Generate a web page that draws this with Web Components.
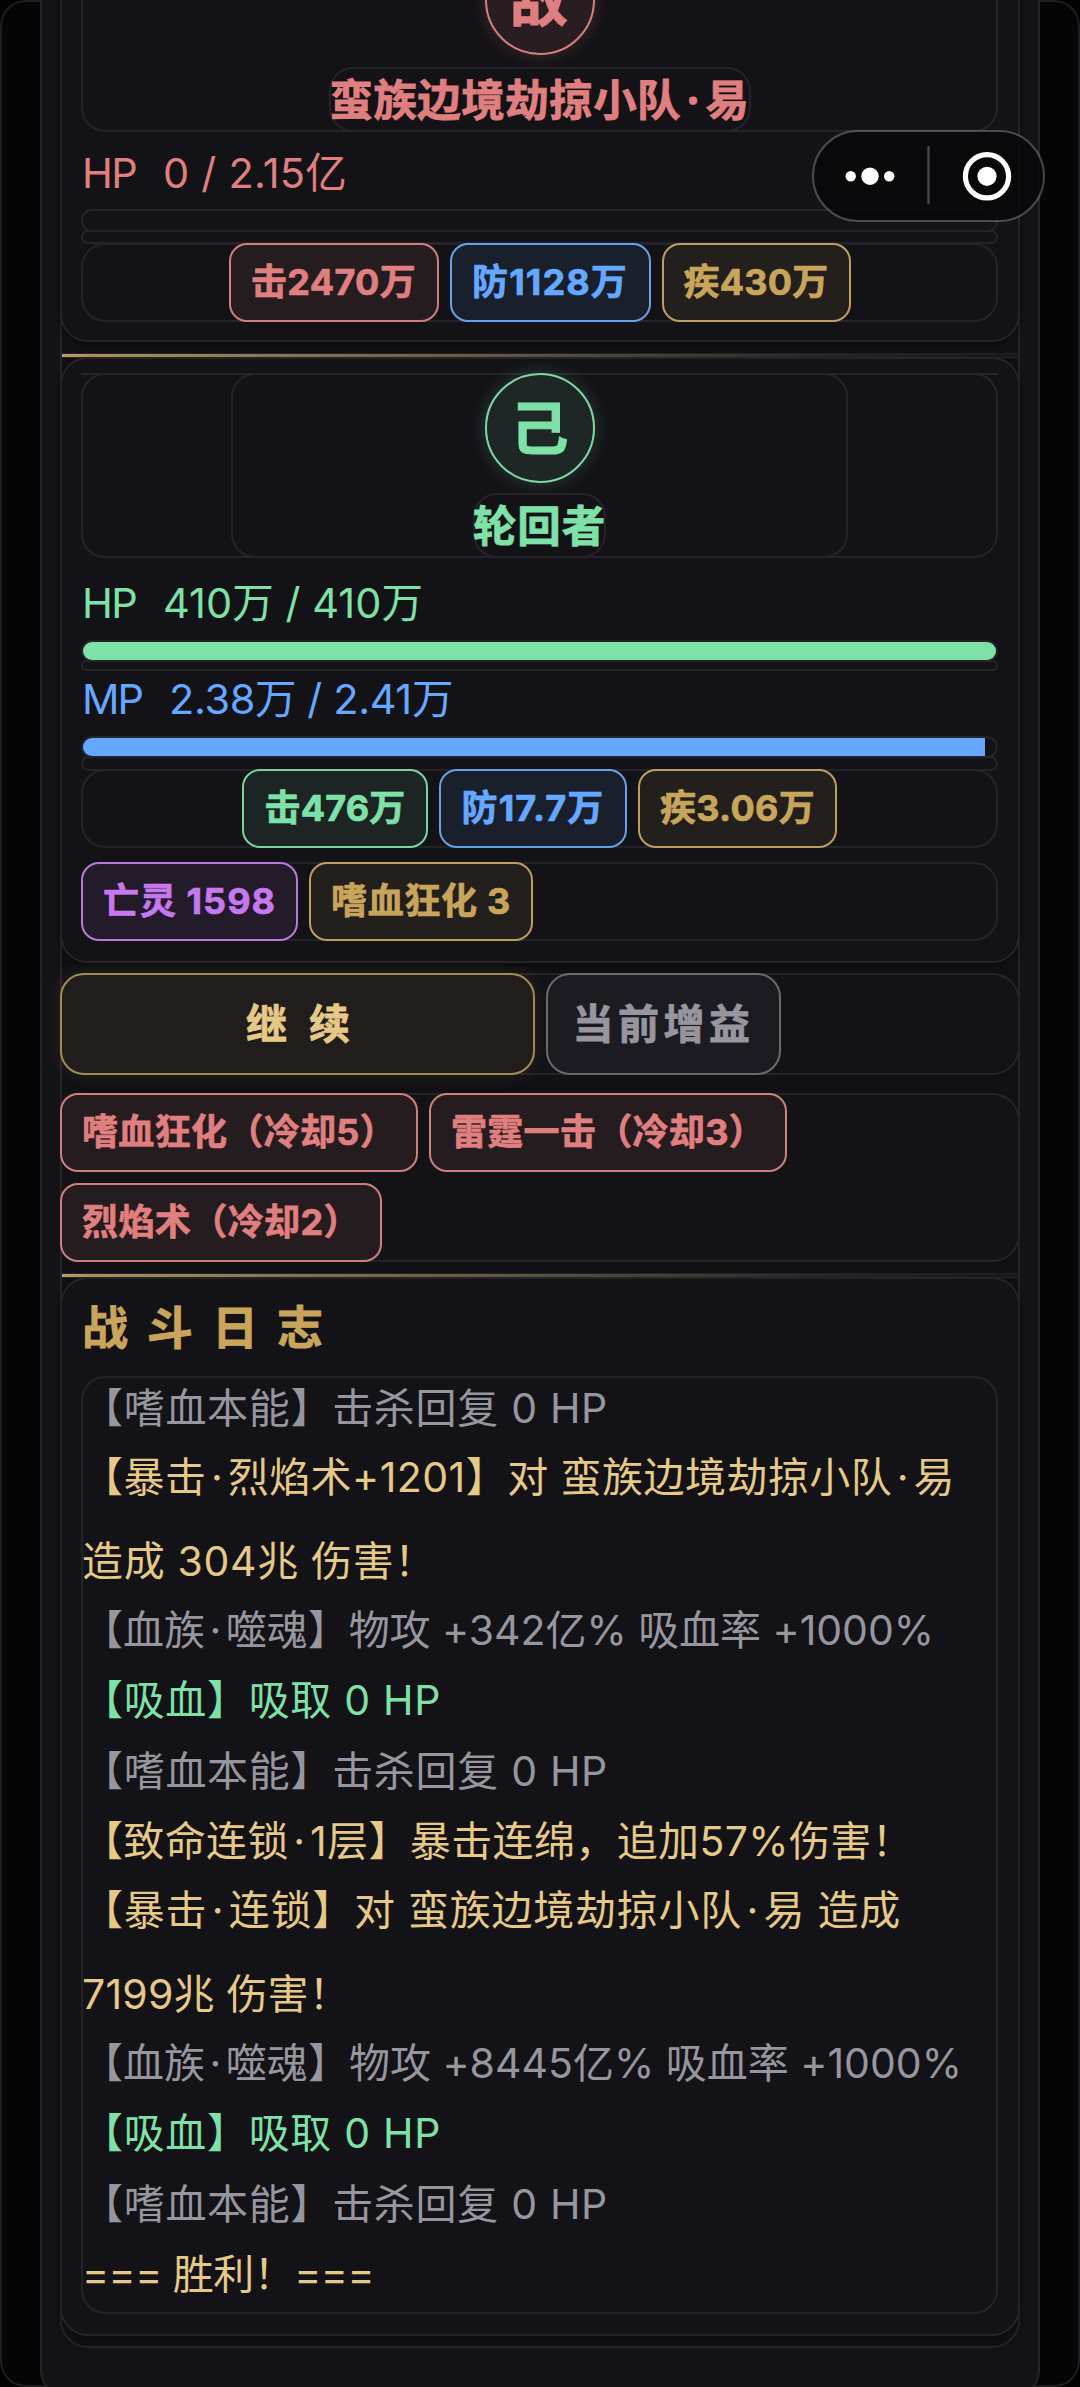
<!DOCTYPE html>
<html lang="zh-CN">
<head>
<meta charset="utf-8">
<title>战斗</title>
<style>
html,body{margin:0;background:#000}
body{font-family:Inter,"Noto Sans CJK SC",sans-serif;font-size:41px;color:#97969f;
--line:#232329;--red:#e07f7f;--green:#7ee2a8;--blue:#64a8ff;--gold:#c9a55c;--light:#e6c987;--purple:#c678ef;--grey:#97969f}
i{font-style:normal;margin:0 .11em}
</style>
</head>
<body>
<game-screen>
  <mini-capsule slot="overlay"></mini-capsule>
  <unit-card style="--bottom:18px">
    <unit-head style="height:187px;color:var(--red)">
      <unit-avatar tone="red">敌</unit-avatar>
      <unit-name style="width:422px;height:65px"><fit-text w="420">蛮族边境劫掠小队<i>·</i>易</fit-text></unit-name>
    </unit-head>
    <stat-line style="height:77px;line-height:77px;color:var(--red)"><fit-text w="54">HP</fit-text><fit-text w="184">0 / 2.15亿</fit-text></stat-line>
    <stat-bar style="height:23px"></stat-bar>
    <bar-track style="height:14px;margin-top:-2px"></bar-track>
    <pill-row center style="margin-top:-1px">
      <tag-pill tone="red" style="width:210px"><fit-text w="165">击2470万</fit-text></tag-pill>
      <tag-pill tone="blue" style="width:201px"><fit-text w="156">防1128万</fit-text></tag-pill>
      <tag-pill tone="gold" style="width:189px"><fit-text w="145">疾430万</fit-text></tag-pill>
    </pill-row>
  </unit-card>
  <gold-rule></gold-rule>
  <unit-card style="--top:14px;--bottom:20px;margin-top:-1px">
    <thin-line></thin-line>
    <unit-head style="height:185px;margin-top:-2px;color:var(--green)" inner>
      <unit-avatar tone="green">己</unit-avatar>
      <unit-name style="width:133px;height:65px"><fit-text w="133">轮回者</fit-text></unit-name>
    </unit-head>
    <stat-line style="height:82px;line-height:84px;color:var(--green)"><fit-text w="54">HP</fit-text><fit-text w="260">410万 / 410万</fit-text></stat-line>
    <stat-bar style="height:22px;--fill:var(--green)" value="100"></stat-bar>
    <bar-track style="height:11px;margin-top:-2px"></bar-track>
    <stat-line style="height:65px;line-height:51px;color:var(--blue)"><fit-text w="60">MP</fit-text><fit-text w="284">2.38万 / 2.41万</fit-text></stat-line>
    <stat-bar style="height:22px;--fill:var(--blue)" value="98.8"></stat-bar>
    <bar-track style="height:15px;margin-top:-2px"></bar-track>
    <pill-row center style="margin-top:-2px">
      <tag-pill tone="green" style="width:186px"><fit-text w="141">击476万</fit-text></tag-pill>
      <tag-pill tone="blue" style="width:188px"><fit-text w="143">防17.7万</fit-text></tag-pill>
      <tag-pill tone="gold" style="width:199px"><fit-text w="155">疾3.06万</fit-text></tag-pill>
    </pill-row>
    <pill-row style="margin-top:14px">
      <tag-pill tone="purple" style="width:217px"><fit-text w="173">亡灵 1598</fit-text></tag-pill>
      <tag-pill tone="gold" style="width:224px"><fit-text w="180">嗜血狂化 3</fit-text></tag-pill>
    </pill-row>
  </unit-card>
  <action-row>
    <action-button primary><fit-text w="110" style="margin-left:7px">继 续</fit-text></action-button>
    <action-button><fit-text w="182">当前增益</fit-text></action-button>
  </action-row>
  <pill-row wide style="margin-top:18px">
    <tag-pill tone="red" style="width:358px"><fit-text w="314">嗜血狂化（冷却5）</fit-text></tag-pill>
    <tag-pill tone="red" style="width:358px"><fit-text w="314">雷霆一击（冷却3）</fit-text></tag-pill>
    <tag-pill tone="red" style="width:322px"><fit-text w="278">烈焰术（冷却2）</fit-text></tag-pill>
  </pill-row>
  <gold-rule></gold-rule>
  <unit-card style="--bottom:20px;margin-top:-1px">
    <log-title><fit-text w="245">战 斗 日 志</fit-text></log-title>
    <battle-log>
      <log-line><fit-text w="526">【嗜血本能】击杀回复 0 HP</fit-text></log-line>
      <log-line tone="light" double><fit-text w="873">【暴击<i>·</i>烈焰术+1201】对 蛮族边境劫掠小队<i>·</i>易</fit-text><fit-text w="354">造成 304兆 伤害！</fit-text></log-line>
      <log-line><fit-text w="852">【血族<i>·</i>噬魂】物攻 +342亿% 吸血率 +1000%</fit-text></log-line>
      <log-line tone="green"><fit-text w="359">【吸血】吸取 0 HP</fit-text></log-line>
      <log-line><fit-text w="526">【嗜血本能】击杀回复 0 HP</fit-text></log-line>
      <log-line tone="light"><fit-text w="831">【致命连锁<i>·</i>1层】暴击连绵，追加57%伤害！</fit-text></log-line>
      <log-line tone="light" double><fit-text w="819">【暴击<i>·</i>连锁】对 蛮族边境劫掠小队<i>·</i>易 造成</fit-text><fit-text w="268">7199兆 伤害！</fit-text></log-line>
      <log-line><fit-text w="880">【血族<i>·</i>噬魂】物攻 +8445亿% 吸血率 +1000%</fit-text></log-line>
      <log-line tone="green"><fit-text w="359">【吸血】吸取 0 HP</fit-text></log-line>
      <log-line><fit-text w="526">【嗜血本能】击杀回复 0 HP</fit-text></log-line>
      <log-line tone="light"><fit-text w="292">=== 胜利！===</fit-text></log-line>
    </battle-log>
  </unit-card>
</game-screen>
<script>
const tones = ['red','green','blue','gold','light','purple','grey']
  .map(t => `:host([tone=${t}]){--tone:var(--${t})}`).join('');
function define(name, css, html = '<slot></slot>', setup) {
  customElements.define(name, class extends HTMLElement {
    constructor() {
      super();
      this.attachShadow({mode: 'open'}).innerHTML =
        `<style>*,:host{box-sizing:border-box}${css}</style>${html}`;
    }
    connectedCallback() { if (setup) setup(this); }
  });
}

define('game-screen', `
  :host{display:block;position:relative;height:2387px;overflow:hidden;background:#000}
  .back{height:2387px;border:2px solid #1d1d22;border-radius:26px;background:#050506;padding:0 38px}
  .panel{margin-top:-102px;height:2498px;border:2px solid #232328;border-radius:28px;background:#131217;padding:10px 18px}
  .stage{height:2436px;border:2px solid var(--line);border-radius:28px;background:#101015;padding-top:29px}
`, `<div class="back"><div class="panel"><div class="stage"><slot></slot></div></div></div><slot name="overlay"></slot>`);

define('mini-capsule', `
  :host{position:absolute;z-index:3;left:812px;top:130px;width:233px;height:92px}
  svg{display:block}
`, `<svg width="233" height="92" viewBox="0 0 233 92">
  <rect x="1" y="1" width="231" height="90" rx="45" fill="#060608" fill-opacity=".78" stroke="#fff" stroke-opacity=".25" stroke-width="2"/>
  <g fill="#fff"><circle cx="38.7" cy="46.2" r="5.2"/><circle cx="58" cy="46.2" r="8.7"/><circle cx="77.2" cy="46.2" r="5.2"/><circle cx="175" cy="46.3" r="9.6"/></g>
  <path d="M116.5 16v58" stroke="#fff" stroke-opacity=".25" stroke-width="2.4"/>
  <circle cx="175" cy="46.3" r="21.6" fill="none" stroke="#fff" stroke-width="5.2"/></svg>`);

define('unit-card', `
  :host{display:flex;flex-direction:column;margin:0 -2px;border:2px solid var(--line);border-radius:28px;
  background:#131217;padding:var(--top,0) 20px var(--bottom) 19px;box-shadow:0 3px 8px rgba(0,0,0,.3)}
`);
define('thin-line', `:host{display:block;height:2px;background:var(--line)}`, '');
define('unit-head', `
  :host{display:flex;justify-content:center;border:2px solid var(--line);border-radius:24px}
  .in{display:flex;flex-direction:column;align-items:center;justify-content:space-between;width:100%;margin:-2px 0}
  :host([inner]) .in{width:617px;border:2px solid var(--line);border-radius:24px}
  :host([inner]) ::slotted(unit-avatar){margin-top:-2px}
  :host([inner]) ::slotted(unit-name){margin-bottom:-2px}
`, `<div class="in"><slot></slot></div>`);
define('unit-avatar', `${tones}
  :host{display:flex;align-items:center;justify-content:center;flex:none;width:110px;height:110px;border-radius:50%;
  border:2px solid color-mix(in srgb,var(--tone) 88%,#888);background:color-mix(in srgb,var(--tone) 10%,#131217);
  box-shadow:0 0 18px color-mix(in srgb,var(--tone) 22%,transparent);font-size:58px;font-weight:700;line-height:106px;
  -webkit-text-stroke:1px currentColor}
`);
define('unit-name', `
  :host{display:flex;justify-content:center;align-items:center;flex:none;border:2px solid var(--line);border-radius:24px;
  font-size:43.5px;font-weight:700;line-height:62px;-webkit-text-stroke:.8px currentColor}
`);
define('stat-line', `:host{display:flex;gap:27px;padding:3px 0 0 1px;font-size:41.5px;white-space:nowrap}`);
define('stat-bar', `
  :host{display:block;border:2px solid var(--line);border-radius:11px;overflow:hidden}
  div{height:100%;width:0;background:var(--fill)}
`, '<div></div>', el => {
  el.shadowRoot.querySelector('div').style.width = (el.getAttribute('value') || 0) + '%';
});
define('bar-track', `:host{display:block;border:2px solid var(--line);border-radius:8px}`, '');
define('pill-row', `
  :host{display:flex;flex-wrap:wrap;gap:11px;border:2px solid var(--line);border-radius:24px}
  .in{display:flex;flex-wrap:wrap;gap:11px;margin:-2px;flex:1 1 100%}
  :host([center]) .in{justify-content:center}
  :host([wide]){margin-left:-2px;margin-right:-2px;border-radius:28px;background:#131217}
`, `<div class="in"><slot></slot></div>`);
define('tag-pill', `${tones}
  :host{display:flex;justify-content:center;align-items:center;flex:none;height:79px;border-radius:18px;
  border:2px solid color-mix(in srgb,var(--tone) 85%,#777);background:color-mix(in srgb,var(--tone) 9%,#131217);
  color:var(--tone);font-size:36px;font-weight:700;line-height:75px;-webkit-text-stroke:.7px currentColor}
`);
define('gold-rule', `
  :host{display:block;height:5px;margin-top:11px;border:solid var(--line);border-width:1px 0;
  background:linear-gradient(90deg,#b79c62,#5d563f 50%,#2d2a29 78%,#17171c)}
`, '');
define('action-row', `
  :host{display:flex;height:102px;margin:10px -2px 0;border:2px solid var(--line);border-radius:28px;background:#131217}
  .in{display:flex;gap:11px;margin:-2px}
`, `<div class="in"><slot></slot></div>`);
define('action-button', `
  :host{display:flex;align-items:center;justify-content:center;width:235px;border:2px solid #696970;border-radius:24px;
  background:#1c1b22;color:var(--grey);font-size:41px;font-weight:700;line-height:98px;-webkit-text-stroke:.8px currentColor}
  :host([primary]){width:475px;border-color:#a38b56;background:#211d1c;color:var(--light);box-shadow:0 0 20px rgba(201,165,92,.12)}
`);
define('log-title', `:host{display:block;height:97px;line-height:97px;font-size:46px;font-weight:700;color:var(--gold);padding-left:1px;-webkit-text-stroke:.8px currentColor}`);
define('battle-log', `:host{display:block;height:938px;border:2px solid var(--line);border-radius:24px}
  .in{display:flex;flex-direction:column;margin:-5px 0 0 -1px}`, `<div class="in"><slot></slot></div>`);
define('log-line', `:host{--tone:var(--grey)}${tones}
  :host{display:flex;flex-direction:column;align-items:flex-start;color:var(--tone);font-size:41px;line-height:70.5px}
  :host([double]){line-height:84px;margin:-8.5px 0}
`);

/* Spreads its text over the advance width given in "w" by tracking. */
define('fit-text', `:host{display:inline-block;flex:none;white-space:nowrap}`, '<slot></slot>', el => {
  const n = [...el.textContent].length, natural = el.getBoundingClientRect().width;
  el.style.letterSpacing = ((+el.getAttribute('w') - natural) / n).toFixed(3) + 'px';
});
</script>
</body>
</html>
